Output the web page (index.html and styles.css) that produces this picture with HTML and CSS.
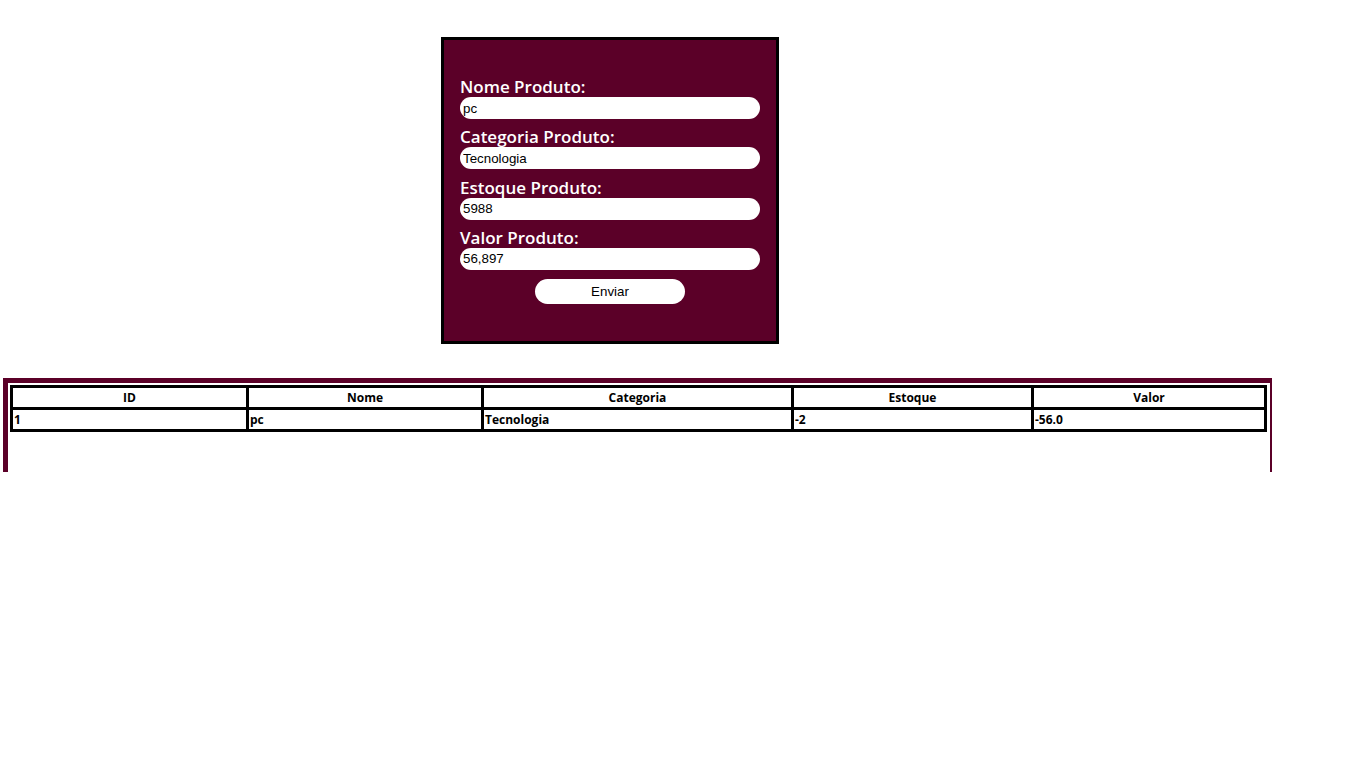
FILE: index.html
```html
<!DOCTYPE html>
<html lang="pt">
<head>
<meta charset="utf-8">
<title>Produtos</title>
<link rel="stylesheet" href="styles.css">
</head>
<body>
<div class="form-wrap">
  <form class="form-box">
    <label class="field-label" for="nome">Nome Produto:</label>
    <input class="field-input" id="nome" type="text" value="pc">
    <label class="field-label" for="cat">Categoria Produto:</label>
    <input class="field-input" id="cat" type="text" value="Tecnologia">
    <label class="field-label" for="est">Estoque Produto:</label>
    <input class="field-input" id="est" type="text" value="5988">
    <label class="field-label" for="val">Valor Produto:</label>
    <input class="field-input" id="val" type="text" value="56,897">
    <div class="btn-row"><button class="send-btn" type="button">Enviar</button></div>
  </form>
</div>
<section class="table-section">
  <table class="data-table">
    <colgroup>
      <col class="c1"><col class="c2"><col class="c3"><col class="c4"><col class="c5">
    </colgroup>
    <thead>
      <tr><th>ID</th><th>Nome</th><th>Categoria</th><th>Estoque</th><th>Valor</th></tr>
    </thead>
    <tbody>
      <tr><td>1</td><td>pc</td><td>Tecnologia</td><td>-2</td><td>-56.0</td></tr>
    </tbody>
  </table>
</section>
</body>
</html>
```

FILE: styles.css
```css
html, body {
  margin: 0;
  padding: 0;
  background: #ffffff;
}

body {
  font-family: "Open Sans", "DejaVu Sans", sans-serif;
}

.form-wrap {
  padding: 37px 0 0 441px;
  display: flex;
}

.form-box {
  width: 300px;
  height: 227px;
  padding: 37px 16px 37px 16px;
  background: #5b0028;
  border: 3px solid #000000;
  display: flex;
  flex-direction: column;
}

.field-label {
  color: #ffffff;
  font-family: "Open Sans", "DejaVu Sans", sans-serif;
  font-weight: 600;
  font-size: 17px;
  line-height: 20px;
  height: 20px;
  flex: none;
}

.field-input {
  box-sizing: border-box;
  flex: none;
  width: 300px;
  height: 22px;
  margin: 0 0 8.33px 0;
  padding: 0 3px;
  border: none;
  border-radius: 11px;
  background: #ffffff;
  font-family: "Liberation Sans", Arial, sans-serif;
  font-size: 13.33px;
  color: #000000;
  outline: none;
}

.btn-row {
  display: flex;
  justify-content: center;
  padding-top: 0.7px;
  flex: none;
}

.send-btn {
  width: 150px;
  height: 25px;
  border: none;
  border-radius: 12.5px;
  background: #ffffff;
  color: #000000;
  font-family: "Liberation Sans", Arial, sans-serif;
  font-size: 13.33px;
  padding: 0;
}

.table-section {
  margin: 34px 0 0 3px;
  width: 1260px;
  height: 87px;
  border-top: 5px solid #5b0028;
  border-left: 5px solid #5b0028;
  border-right: 2px solid #5b0028;
  padding: 2px 0 0 2px;
}

.data-table {
  border-collapse: collapse;
  table-layout: fixed;
  width: 1257px;
  border: 3px solid #000000;
  font-family: "Open Sans", "DejaVu Sans", sans-serif;
  font-size: 12px;
  font-weight: 700;
  color: #000000;
}

.c1 { width: 236px; }
.c2 { width: 235px; }
.c3 { width: 310px; }
.c4 { width: 240px; }
.c5 { width: 233px; }

.data-table th,
.data-table td {
  border: 3px solid #000000;
  height: 19px;
  padding: 0 1px;
  line-height: 19px;
}

.data-table th {
  text-align: center;
}

.data-table td {
  text-align: left;
}
```
